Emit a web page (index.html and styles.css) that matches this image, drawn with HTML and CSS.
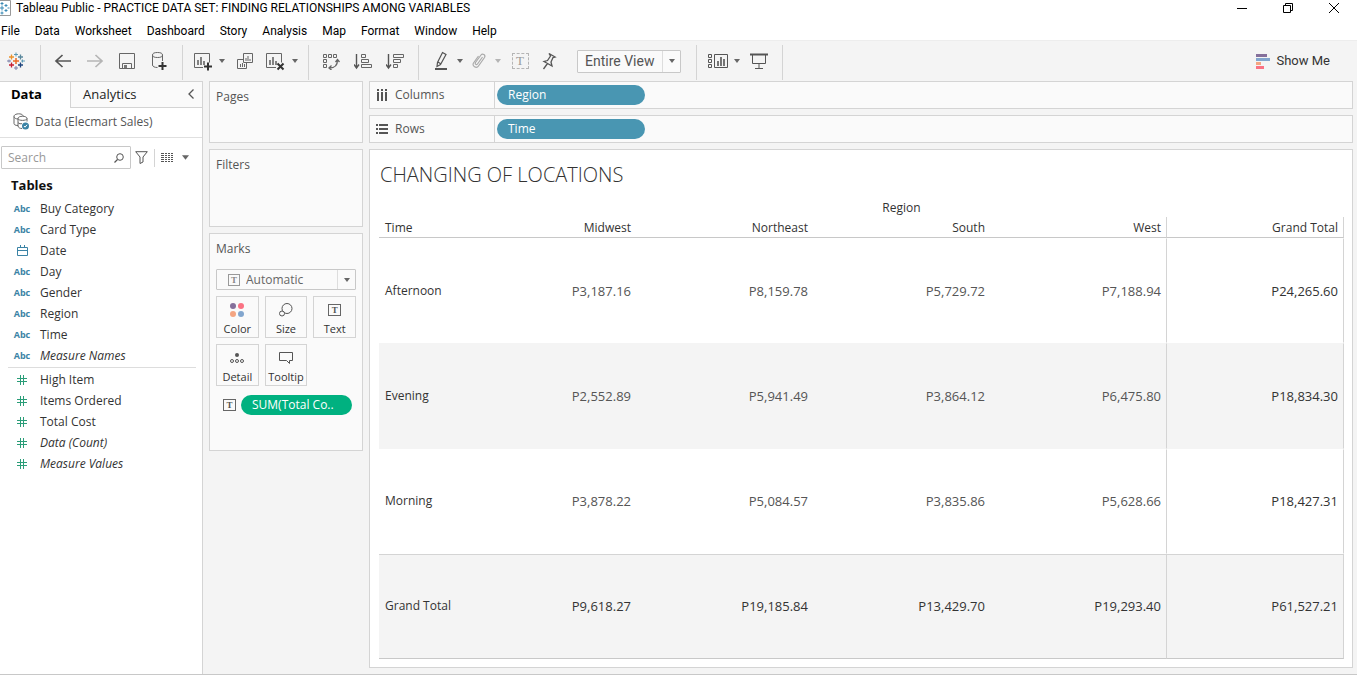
FILE: index.html
```html
<!DOCTYPE html>
<html lang="en">
<head>
    <meta charset="UTF-8">
    <meta name="viewport" content="width=device-width, initial-scale=1.0">
    <title>Tableau Public - PRACTICE DATA SET: FINDING RELATIONSHIPS AMONG VARIABLES</title>
    <link rel="stylesheet" href="styles.css">
</head>
<body>
    <!-- Shared icons -->
    <svg class="sprite" aria-hidden="true">
        <symbol id="caret" viewBox="0 0 6 4"><path d="M0 0h6L3 4z" fill="currentColor"/></symbol>
        <symbol id="hash" viewBox="0 0 10 10"><path d="M3.500 0v10M6.500 0v10M0 3.500h10M0 6.500h10" stroke="currentColor" fill="none"/></symbol>
    </svg>

    <header>
        <div class="title-bar">
            <svg class="app-icon" width="11" height="16" viewBox="0 0 11 16"><path d="M0 .5h10.500v15H0" fill="#fff" stroke="#999"/><path d="M0 8h4M2 5.500v5M2 2v3M.5 3.500h3M6 4v3M4.500 5.500h3M6 9v3M4.500 10.500h3M2 11.500v3M.5 13h3M7.500 8h2" stroke="#3a8ab5"/></svg>
            <span>Tableau Public - PRACTICE DATA SET: FINDING RELATIONSHIPS AMONG VARIABLES</span>
            <div class="window-buttons">
                <button aria-label="Minimize"><svg width="12" height="12"><path d="M1 6.500h10" stroke="#000"/></svg></button>
                <button aria-label="Restore"><svg width="12" height="12"><path d="M1.500 3.500h7v7h-7zM3.500 3.500v-2h7v7h-2" fill="none" stroke="#000"/></svg></button>
                <button aria-label="Close"><svg width="12" height="12"><path d="M1 1l10 10M11 1L1 11" stroke="#000"/></svg></button>
            </div>
        </div>
        <nav class="menu">
            <a href="#">File</a>
            <a href="#">Data</a>
            <a href="#">Worksheet</a>
            <a href="#">Dashboard</a>
            <a href="#">Story</a>
            <a href="#">Analysis</a>
            <a href="#">Map</a>
            <a href="#">Format</a>
            <a href="#">Window</a>
            <a href="#">Help</a>
        </nav>
    </header>

    <div class="toolbar">
        <div class="group start">
            <button aria-label="Start page"><svg width="18" height="18" viewBox="0 0 18 18" fill="none"><path d="M9 6v6M6 9h6" stroke="#eb6a25" stroke-width="1.500"/><path d="M4.500 2.500v5M2 5h5" stroke="#eb912b" stroke-width="1.300"/><path d="M13.500 2.500v5M11 5h5" stroke="#59879b" stroke-width="1.300"/><path d="M4.500 10.500v5M2 13h5" stroke="#c72035" stroke-width="1.300"/><path d="M13.500 10.500v5M11 13h5" stroke="#1f457e" stroke-width="1.300"/><path d="M9 .5v4M7 2.500h4M15.500 7.500v3M14 9h4" stroke="#5c9ab5"/><path d="M9 14v4M7 16h4M2 7.500v3M0 9h4" stroke="#7b80a8"/></svg></button>
        </div>
        <div class="group file">
            <button aria-label="Undo"><svg width="18" height="18" viewBox="0 0 18 18"><path d="M17 9H2M8.500 3L2 9l6.500 6" fill="none" stroke="#555" stroke-width="1.700"/></svg></button>
            <button aria-label="Redo" disabled><svg width="18" height="18" viewBox="0 0 18 18"><path d="M1 9h15M9.500 3L16 9l-6.500 6" fill="none" stroke="#b5b5b5" stroke-width="1.700"/></svg></button>
            <button aria-label="Save"><svg width="18" height="18" viewBox="0 0 18 18"><path d="M1.500 1.500h15v15h-15zM4.500 16v-4.500h9V16" fill="none" stroke="#666"/><path d="M6 13h3v3H6z" fill="#777"/></svg></button>
            <button aria-label="New data source"><svg width="18" height="20" viewBox="0 0 18 20"><ellipse cx="7.500" cy="4" rx="5" ry="2.500" fill="none" stroke="#666"/><path d="M2.500 4v10c0 1.500 2 2.500 5 2.500M12.500 4v6" fill="none" stroke="#666"/><path d="M12.500 11v8M8.500 15h8" stroke="#333" stroke-width="2"/></svg></button>
        </div>
        <div class="group sheet">
            <button class="narrow" aria-label="New worksheet"><svg width="20" height="20" viewBox="0 0 20 20"><path d="M11 16.500H2.500V2.500h15v9" fill="none" stroke="#666"/><path d="M6 9v5M9 6v8M12 10v4" stroke="#666" stroke-width="1.600"/><path d="M16 11.500v8M12 15.500h8" stroke="#333" stroke-width="2"/></svg></button>
            <button class="caret" aria-label="New worksheet options"><svg><use href="#caret"/></svg></button>
            <button aria-label="Duplicate"><svg width="18" height="18" viewBox="0 0 18 18"><path d="M7.500 1.500h9v9h-9zM7 7.500H1.500v9h9V11" fill="none" stroke="#666"/><path d="M10 6v3M12 4v5M14 7v2M4.500 12v3M6.500 11v4M8.500 12v3" stroke="#666"/></svg></button>
            <button class="narrow" aria-label="Clear sheet"><svg width="20" height="20" viewBox="0 0 20 20"><path d="M11 16.500H1.500V2.500h15v9" fill="none" stroke="#666"/><path d="M5 9v5M8 6v8M11 10v4" stroke="#666" stroke-width="1.600"/><path d="M12.500 12.500l6 6M18.500 12.500l-6 6" stroke="#333" stroke-width="2"/></svg></button>
            <button class="caret" aria-label="Clear options"><svg><use href="#caret"/></svg></button>
        </div>
        <div class="group sort">
            <button aria-label="Swap rows and columns"><svg width="18" height="18" viewBox="0 0 18 18"><path d="M1.500 2.500h3v3h-3zM6.500 2.500h3v3h-3zM11.500 2.500h3v3h-3zM1.500 7.500h3v3h-3zM1.500 12.500h3v3h-3z" fill="none" stroke="#666"/><path d="M15.500 8c0 5-3 8-8 8M13.500 10l2-2.500 2 2.500M9.500 13.500L7 16l2.500 2" fill="none" stroke="#666" stroke-width="1.300"/></svg></button>
            <button aria-label="Sort ascending"><svg width="18" height="18" viewBox="0 0 18 18"><path d="M2.500 2v14M0 12.500L2.500 16 5 12.500" fill="none" stroke="#555" stroke-width="1.400"/><path d="M7.500 2.500h4v3h-4zM7.500 7.500h7v3h-7zM7.500 12.500h10v3h-10z" fill="none" stroke="#666"/></svg></button>
            <button aria-label="Sort descending"><svg width="18" height="18" viewBox="0 0 18 18"><path d="M2.500 2v14M0 12.500L2.500 16 5 12.500" fill="none" stroke="#555" stroke-width="1.400"/><path d="M7.500 2.500h10v3h-10zM7.500 7.500h7v3h-7zM7.500 12.500h4v3h-4z" fill="none" stroke="#666"/></svg></button>
        </div>
        <div class="group format">
            <button class="narrow" aria-label="Highlight"><svg width="16" height="20" viewBox="0 0 16 20"><path d="M9.500 1.500l3.500 2-5.500 10-3.500 2 .5-4zM5 11l3 2" fill="none" stroke="#555" stroke-width="1.200"/><path d="M2 18h12" stroke="#555" stroke-width="2"/></svg></button>
            <button class="caret" aria-label="Highlight options"><svg><use href="#caret"/></svg></button>
            <button class="narrow" aria-label="Group members" disabled><svg width="16" height="18" viewBox="0 0 16 18"><path d="M11.500 5L6.500 12c-1 1.500-3 0-2-1.500l5.500-7.500c1.500-2 5 0 3.500 2.500L7.500 14c-2 3-7 0-5-3l5-7" fill="none" stroke="#aaa" stroke-width="1.200"/></svg></button>
            <button class="caret" aria-label="Group options" disabled><svg><use href="#caret"/></svg></button>
            <button aria-label="Show mark labels" disabled><span class="label-icon">T</span></button>
            <button class="narrow" aria-label="Fix axes"><svg width="16" height="18" viewBox="0 0 16 18"><path d="M8 1.500l6 3.500-2 .5-2 4.500 1 4L3 9.500l3.500-1 3-4.500zM6.500 11.500L2.500 17" fill="none" stroke="#555" stroke-width="1.300"/></svg></button>
            <div class="select-box fit">
                <select aria-label="Fit"><option>Entire View</option><option>Standard</option></select>
                <span class="arrow"><svg><use href="#caret"/></svg></span>
            </div>
        </div>
        <div class="group show">
            <button class="narrow" aria-label="Show cards"><svg width="20" height="16" viewBox="0 0 20 16"><path d="M.5 1.500h3v3h-3zM.5 6.500h3v3h-3zM.5 11.500h3v3h-3zM6.500 1.500h13v13h-13z" fill="none" stroke="#555"/><path d="M10 8v5M13 4v9M16 6v7" stroke="#555" stroke-width="1.600"/></svg></button>
            <button class="caret" aria-label="Card options"><svg><use href="#caret"/></svg></button>
            <button aria-label="Presentation mode"><svg width="18" height="18" viewBox="0 0 18 18"><path d="M0 2.500h18" stroke="#555" stroke-width="2"/><path d="M2.500 3v8.500h13V3M9 12v4.500M5 16.500h8" fill="none" stroke="#555"/></svg></button>
        </div>
        <button class="show-me">
            <svg width="14" height="15"><path d="M0 0h11v3H0z" fill="#85709b"/><path d="M0 4h14v3H0z" fill="#82a6ce"/><path d="M0 8h5v3H0z" fill="#f4a582"/><path d="M0 12h8v3H0z" fill="#fa7283"/></svg>
            Show Me
        </button>
    </div>

    <main>
        <aside class="data-pane">
            <div class="tabs">
                <button class="tab active">Data</button>
                <button class="tab">Analytics</button>
                <button class="collapse" aria-label="Collapse"><svg width="6" height="10"><path d="M5.500 .5L1 5l4.500 4.500" fill="none" stroke="#555" stroke-width="1.300"/></svg></button>
            </div>
            <div class="source">
                <svg width="16" height="17" viewBox="0 0 16 17"><path d="M5 12.500c-3 0-4-1-4-2V3.500C1 0 10 0 10 3M1 3.500C1 5 3 6 5 6" fill="none" stroke="#666"/><path d="M5 5.500v7.500c0 1.500 2 2.500 4 2.500M5 5.500c0-3 9-3 9 0v3M5 5.500c0 2.500 9 2.500 9 0M5 9.500c1 1.500 3 1.500 4 1" fill="none" stroke="#666"/><circle cx="12.500" cy="13" r="3.500" fill="#3b83a5"/><path d="M11 13l1 1.200 2-2.400" fill="none" stroke="#fff"/></svg>
                Data (Elecmart Sales)
            </div>
            <div class="search-row">
                <div class="search">
                    <input type="text" placeholder="Search" aria-label="Search">
                    <svg width="10" height="10"><circle cx="6" cy="4" r="3.300" fill="none" stroke="#555"/><path d="M3.500 6.500L.5 9.500" stroke="#555" stroke-width="1.300"/></svg>
                </div>
                <button class="filter" aria-label="Filter"><svg width="13" height="13"><path d="M.7 .7h11.600L8 6v5l-3 1.500V6z" fill="none" stroke="#555"/></svg></button>
                <button class="list-view" aria-label="View as list"><svg width="12" height="10"><path d="M0 .5h12M0 2.500h12M0 4.500h12M0 6.500h12M0 8.500h12" stroke="#555" stroke-dasharray="3 1 2 1 2 1 2 0"/></svg></button>
                <button class="caret" aria-label="View options"><svg><use href="#caret"/></svg></button>
            </div>
            <h2>Tables</h2>
            <ul class="fields dimensions">
                <li><span class="type">Abc</span>Buy Category</li>
                <li><span class="type">Abc</span>Card Type</li>
                <li><span class="type"><svg width="11" height="11"><path d="M.5 2.500h10v8H.5zM.5 5.500h10M3.500 0v3M7.500 0v3" fill="none" stroke="currentColor"/></svg></span>Date</li>
                <li><span class="type">Abc</span>Day</li>
                <li><span class="type">Abc</span>Gender</li>
                <li><span class="type">Abc</span>Region</li>
                <li><span class="type">Abc</span>Time</li>
                <li class="generated"><span class="type">Abc</span>Measure Names</li>
            </ul>
            <ul class="fields measures">
                <li><span class="type"><svg width="10" height="10"><use href="#hash"/></svg></span>High Item</li>
                <li><span class="type"><svg width="10" height="10"><use href="#hash"/></svg></span>Items Ordered</li>
                <li><span class="type"><svg width="10" height="10"><use href="#hash"/></svg></span>Total Cost</li>
                <li class="generated"><span class="type"><svg width="10" height="10"><use href="#hash"/></svg></span>Data (Count)</li>
                <li class="generated"><span class="type"><svg width="10" height="10"><use href="#hash"/></svg></span>Measure Values</li>
            </ul>
        </aside>

        <div class="cards">
            <section class="card pages"><h3>Pages</h3></section>
            <section class="card filters"><h3>Filters</h3></section>
            <section class="card marks">
                <h3>Marks</h3>
                <div class="select-box mark-type">
                    <span class="text-icon">T</span>
                    <select aria-label="Mark type"><option>Automatic</option><option>Text</option></select>
                    <span class="arrow"><svg><use href="#caret"/></svg></span>
                </div>
                <div class="mark-buttons">
                    <button><svg width="16" height="16"><circle cx="4" cy="4" r="3" fill="#85709b"/><circle cx="12" cy="4" r="3" fill="#fa7283"/><circle cx="4" cy="12" r="3" fill="#f4a582"/><circle cx="12" cy="12" r="3" fill="#82a6ce"/></svg>Color</button>
                    <button><svg width="16" height="16"><circle cx="9" cy="6.500" r="5" fill="none" stroke="#555"/><circle cx="4" cy="11.500" r="2.500" fill="#fafafa" stroke="#555"/></svg>Size</button>
                    <button><span class="text-icon">T</span>Text</button>
                    <button><svg width="16" height="16"><circle cx="8" cy="5" r="2" fill="#555"/><circle cx="3" cy="11" r="1.500" fill="none" stroke="#555"/><circle cx="8" cy="11" r="1.500" fill="none" stroke="#555"/><circle cx="13" cy="11" r="1.500" fill="none" stroke="#555"/></svg>Detail</button>
                    <button><svg width="16" height="16"><path d="M1.500 2.500h13v8h-3v3l-3-3h-7z" fill="none" stroke="#555"/></svg>Tooltip</button>
                </div>
                <div class="mark-field">
                    <span class="text-icon">T</span>
                    <button class="pill measure">SUM(Total Co..</button>
                </div>
            </section>
        </div>

        <div class="sheet-area">
            <div class="shelf">
                <div class="shelf-name"><svg width="12" height="12"><path d="M2 0v2M6 0v2M10 0v2M2 3v9M6 3v9M10 3v9" stroke="#555" stroke-width="2"/></svg>Columns</div>
                <button class="pill">Region</button>
            </div>
            <div class="shelf">
                <div class="shelf-name"><svg width="12" height="12"><path d="M0 2h2M0 6h2M0 10h2M3 2h9M3 6h9M3 10h9" stroke="#555" stroke-width="2"/></svg>Rows</div>
                <button class="pill">Time</button>
            </div>
            <section class="view">
                <h1>CHANGING OF LOCATIONS</h1>
                <div class="table-box">
                    <table>
                        <thead>
                            <tr class="region"><th></th><th colspan="5">Region</th></tr>
                            <tr class="names">
                                <th>Time</th>
                                <th>Midwest</th>
                                <th>Northeast</th>
                                <th>South</th>
                                <th>West</th>
                                <th>Grand Total</th>
                            </tr>
                        </thead>
                        <tbody>
                            <tr>
                                <th>Afternoon</th>
                                <td>P3,187.16</td>
                                <td>P8,159.78</td>
                                <td>P5,729.72</td>
                                <td>P7,188.94</td>
                                <td>P24,265.60</td>
                            </tr>
                            <tr>
                                <th>Evening</th>
                                <td>P2,552.89</td>
                                <td>P5,941.49</td>
                                <td>P3,864.12</td>
                                <td>P6,475.80</td>
                                <td>P18,834.30</td>
                            </tr>
                            <tr>
                                <th>Morning</th>
                                <td>P3,878.22</td>
                                <td>P5,084.57</td>
                                <td>P3,835.86</td>
                                <td>P5,628.66</td>
                                <td>P18,427.31</td>
                            </tr>
                            <tr class="total">
                                <th>Grand Total</th>
                                <td>P9,618.27</td>
                                <td>P19,185.84</td>
                                <td>P13,429.70</td>
                                <td>P19,293.40</td>
                                <td>P61,527.21</td>
                            </tr>
                        </tbody>
                    </table>
                </div>
            </section>
        </div>
    </main>
</body>
</html>
```
FILE: styles.css
```css
* {
    box-sizing: border-box;
}

body {
    display: flex;
    flex-direction: column;
    height: 100vh;
    margin: 0;
    font-family: "Open Sans", "Noto Sans", sans-serif;
    font-size: 12px;
    line-height: 16px;
    color: #333;
    background-color: #f4f4f4;
}

button {
    margin: 0;
    padding: 0;
    border: none;
    background: none;
    font: inherit;
    color: inherit;
}

svg {
    display: block;
    flex: none;
}

.sprite {
    position: absolute;
    width: 0;
    height: 0;
}

/* Title bar and menu */
header {
    background-color: #fff;
    color: #000;
    font-family: Roboto, "Open Sans", sans-serif;
}

.title-bar {
    display: flex;
    align-items: center;
    gap: 5px;
    height: 16px;
}

.title-bar span {
    white-space: nowrap;
}

.window-buttons {
    display: flex;
    gap: 34px;
    margin-left: auto;
    padding-right: 17px;
}

.menu {
    display: flex;
    gap: 15px;
    height: 24px;
    padding: 7px 1px;
}

.menu a {
    color: #000;
    text-decoration: none;
}

/* Toolbar */
.toolbar {
    display: flex;
    flex: none;
    align-items: center;
    height: 41px;
    border-top: 1px solid #ededed;
}

.group {
    display: flex;
    align-items: center;
    height: 35px;
    margin-top: 2px;
    padding-bottom: 2px;
    border-right: 1px solid #d4d4d4;
}

.group button {
    display: flex;
    align-items: center;
    justify-content: center;
    width: 32px;
    height: 24px;
}

.group .narrow {
    width: 26px;
}

.group .caret {
    width: 12px;
}

.caret svg,
.arrow svg {
    width: 6px;
    height: 4px;
    color: #666;
}

.caret:disabled svg {
    color: #b5b5b5;
}

.start {
    padding-right: 8px;
}

.file {
    padding-right: 7px;
    padding-left: 6px;
}

.sheet {
    gap: 1px;
    padding-right: 7px;
    padding-left: 6px;
}

.sort {
    padding-right: 7px;
    padding-left: 6px;
}

.format {
    padding-right: 15px;
    padding-left: 9px;
}

.show {
    padding-right: 7px;
    padding-left: 8px;
}

.label-icon {
    width: 17px;
    height: 16px;
    border: 1px dashed #b5b5b5;
    font: 13px/14px "Liberation Serif", serif;
    color: #999;
    text-align: center;
}

.select-box {
    position: relative;
    display: flex;
    align-items: center;
    border: 1px solid #c8c8c8;
    border-radius: 1px;
    background-color: #fafafa;
}

.select-box select {
    appearance: none;
    width: 100%;
    height: 100%;
    margin: 0;
    border: none;
    outline: none;
    background: none;
    font: inherit;
    color: #555;
}

.select-box .arrow {
    position: absolute;
    top: 0;
    right: 0;
    bottom: 0;
    display: flex;
    align-items: center;
    justify-content: center;
    width: 18px;
    border-left: 1px solid #ddd;
    pointer-events: none;
}

.arrow svg {
    width: 8px;
}

.fit {
    width: 104px;
    height: 23px;
    margin-left: 15px;
    font-family: Roboto, sans-serif;
    font-size: 14px;
}

.fit select {
    padding: 0 7px;
}

.show-me {
    display: flex;
    align-items: center;
    gap: 6px;
    margin-left: auto;
    padding-right: 27px;
    font-family: Roboto, sans-serif;
    font-size: 13px;
}

/* Workspace */
main {
    display: flex;
    flex: 1;
    gap: 6px;
    min-height: 0;
    padding-right: 4px;
    border-bottom: 1px solid #c8c8c8;
}

/* Data pane */
.data-pane {
    flex: none;
    width: 203px;
    border-top: 1px solid #d4d4d4;
    border-right: 1px solid #d4d4d4;
    background-color: #fff;
}

.tabs {
    display: flex;
    height: 26px;
    font-size: 13px;
    color: #222;
}

.tab {
    flex: 1;
    padding: 0 0 2px 12px;
    border-bottom: 1px solid #d4d4d4;
    background-color: #fafafa;
    text-align: left;
}

.tab.active {
    flex: none;
    width: 71px;
    padding-left: 11px;
    border-right: 1px solid #d4d4d4;
    border-bottom: none;
    background-color: #fff;
    font-weight: 700;
    color: #000;
}

.collapse {
    width: 20px;
    padding: 0 0 2px 6px;
    border-bottom: 1px solid #d4d4d4;
    background-color: #fafafa;
}

.source {
    display: flex;
    align-items: center;
    gap: 6px;
    height: 30px;
    padding: 0 0 2px 13px;
    border-bottom: 1px solid #e0e0e0;
    color: #555;
}

.search-row {
    display: flex;
    align-items: center;
    margin-top: 8px;
    padding-left: 1px;
}

.search {
    display: flex;
    align-items: center;
    width: 130px;
    height: 23px;
    padding: 0 6px;
    border: 1px solid #c8c8c8;
    border-radius: 1px;
}

.search input {
    flex: 1;
    width: 0;
    margin: 0;
    padding: 0;
    border: none;
    outline: none;
    font: inherit;
}

.search input::placeholder {
    color: #999;
}

.filter {
    padding: 0 6px 0 4px;
}

.list-view {
    padding: 4px 9px 4px 6px;
    border-left: 1px solid #d4d4d4;
}

.search-row .caret svg {
    width: 7px;
    height: 5px;
}

h2 {
    margin: 7px 0 5px 11px;
    font-size: 13px;
    font-weight: 700;
    line-height: 18px;
    color: #111;
}

.fields {
    margin: 0 6px 0 8px;
    padding: 0;
    list-style: none;
}

.fields li {
    display: flex;
    align-items: center;
    height: 21px;
    padding-bottom: 2px;
}

.generated {
    font-style: italic;
}

.type {
    display: flex;
    justify-content: center;
    width: 28px;
    margin-right: 4px;
    font-size: 9px;
    font-style: normal;
    font-weight: 700;
    color: #3b83a5;
}

.measures {
    padding-top: 2px;
    border-top: 1px solid #ddd;
}

.measures .type {
    color: #2a9d78;
}

/* Pages, filters and marks */
.cards {
    flex: none;
    width: 154px;
}

.card {
    margin-bottom: 6px;
    padding: 7px 6px;
    border: 1px solid #d4d4d4;
    background-color: #fafafa;
}

.card h3 {
    margin: 0;
    font-size: 12px;
    font-weight: 400;
    color: #555;
}

.pages {
    min-height: 62px;
}

.filters {
    min-height: 78px;
}

.marks {
    min-height: 218px;
}

.mark-type {
    height: 21px;
    margin-top: 12px;
    padding-left: 11px;
}

.mark-type select {
    padding: 0 6px;
    color: #666;
}

.text-icon {
    flex: none;
    width: 13px;
    height: 12px;
    border: 1px solid #666;
    font: bold 9px/10px "Liberation Serif", serif;
    color: #555;
    text-align: center;
}

.mark-type .text-icon {
    width: 12px;
    border-color: #999;
    color: #888;
}

.mark-buttons {
    display: grid;
    grid-template-columns: repeat(3, 1fr);
    gap: 6px;
    margin-top: 6px;
}

.mark-buttons button {
    display: flex;
    flex-direction: column;
    align-items: center;
    justify-content: space-between;
    height: 42px;
    padding-top: 5px;
    border: 1px solid #d4d4d4;
    font-size: 11px;
}

.mark-buttons .text-icon {
    margin-top: 2px;
}

.mark-field {
    display: flex;
    align-items: center;
    gap: 5px;
    margin-top: 9px;
    padding: 0 4px 0 7px;
}

.pill {
    width: 148px;
    height: 20px;
    padding-left: 11px;
    border-radius: 10px;
    background-color: #4996b2;
    color: #fff;
    text-align: left;
}

.pill.measure {
    flex: 1;
    background-color: #00b180;
    white-space: nowrap;
}

/* Shelves */
.sheet-area {
    display: flex;
    flex: 1;
    flex-direction: column;
    gap: 6px;
    min-width: 0;
}

.shelf {
    display: flex;
    flex: none;
    align-items: center;
    gap: 2px;
    height: 28px;
    border: 1px solid #d4d4d4;
    background-color: #fafafa;
}

.shelf-name {
    display: flex;
    align-items: center;
    gap: 7px;
    width: 125px;
    height: 100%;
    padding-left: 6px;
    border-right: 1px solid #d4d4d4;
    color: #555;
}

/* Worksheet view */
.view {
    display: flex;
    flex: 1;
    flex-direction: column;
    min-height: 0;
    margin-bottom: 6px;
    padding: 11px 8px 8px 9px;
    border: 1px solid #d4d4d4;
    background-color: #fff;
}

h1 {
    margin: 0 0 9px 1px;
    font-size: 20px;
    font-weight: 300;
    line-height: 28px;
}

.table-box {
    flex: 1;
    min-height: 0;
}

table {
    width: 100%;
    height: 100%;
    border-spacing: 0;
    table-layout: fixed;
}

th,
td {
    padding: 0 5px;
    text-align: right;
}

th {
    font-weight: 500;
}

th:first-child {
    width: 80px;
    padding-left: 6px;
    text-align: left;
}

.region th {
    height: 19px;
    text-align: center;
}

.names th {
    height: 21px;
    padding-top: 2px;
    border-bottom: 1px solid #c8c8c8;
}

tbody tr:nth-child(even) {
    background-color: #f4f4f4;
}

tbody th,
tbody td {
    border-top: 1px solid transparent;
    border-bottom: 1px solid transparent;
}

/* Keep row names on one line so every row gets the same height */
tbody th {
    white-space: nowrap;
}

td {
    font-size: 13px;
    color: #555;
}

.names th:nth-child(n + 5),
td:nth-child(n + 5) {
    border-right: 1px solid #d4d4d4;
}

td:last-child,
.total td {
    font-weight: 500;
    color: #333;
}

.total th,
.total td {
    border-top-color: #d4d4d4;
    border-bottom-color: #c8c8c8;
}
```
